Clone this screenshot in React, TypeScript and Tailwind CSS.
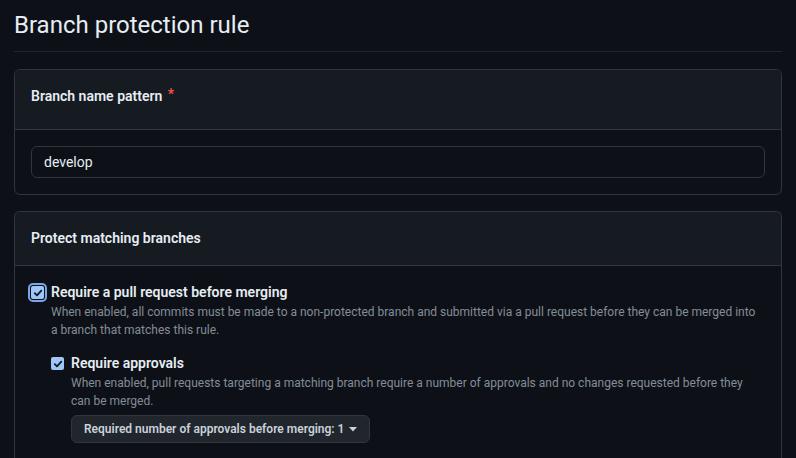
function Check({ focused }: { focused?: boolean }) {
  return (
    <span
      className={`flex h-[13px] w-[13px] shrink-0 items-center justify-center rounded-[2px] bg-[#9fc6f7] ${
        focused ? "outline outline-2 outline-offset-1 outline-[#78a6ea]" : ""
      }`}
    >
      <svg width="10" height="10" viewBox="0 0 10 10" fill="none">
        <path d="M1.8 5.2 4 7.3 8.3 2.6" stroke="#111827" strokeWidth="1.8" strokeLinecap="round" strokeLinejoin="round" />
      </svg>
    </span>
  );
}

export default function App() {
  return (
    <div className="min-h-[458px] bg-[#0d1117] px-[14px] font-['Roboto',sans-serif] text-[#e6edf3]">
      <div className="border-b border-[#21262d] pb-[11px] pt-[10px]">
        <h1 className="text-[24px] leading-[30px] font-normal text-[#e6edf3]">Branch protection rule</h1>
      </div>

      <div className="mt-[17px] rounded-md border border-[#30363d]">
        <div className="rounded-t-md border-b border-[#30363d] bg-[#161b22] px-4 pb-[22px] pt-4">
          <p className="text-[14px] leading-[21px] font-semibold">
            Branch name pattern <span className="relative -top-[2px] ml-[2px] text-[#f85149]">*</span>
          </p>
        </div>
        <div className="p-4">
          <div className="flex h-[32px] items-center rounded-md border border-[#30363d] bg-[#0d1117] px-3 text-[14px] text-[#e6edf3]">
            develop
          </div>
        </div>
      </div>

      <div className="mt-4 rounded-t-md border-x border-t border-[#30363d]">
        <div className="rounded-t-md border-b border-[#30363d] bg-[#161b22] p-4">
          <p className="text-[14px] leading-[21px] font-semibold">Protect matching branches</p>
        </div>
        <div className="p-4">
          <div className="flex items-start gap-[7px]">
            <div className="pt-[4px]">
              <Check focused />
            </div>
            <div>
              <p className="text-[14px] leading-[21px] font-semibold">Require a pull request before merging</p>
              <p className="text-[12px] leading-[18px] text-[#848d97]">
                When enabled, all commits must be made to a non-protected branch and submitted via a pull request before they can be merged into
                <br />
                a branch that matches this rule.
              </p>

              <div className="mt-[14px] flex items-start gap-[7px]">
                <div className="pt-[4px]">
                  <Check />
                </div>
                <div>
                  <p className="text-[14px] leading-[21px] font-semibold">Require approvals</p>
                  <p className="text-[12px] leading-[18px] text-[#848d97]">
                    When enabled, pull requests targeting a matching branch require a number of approvals and no changes requested before they can be merged.
                  </p>
                  <button className="mt-[5px] flex h-[28px] items-center gap-[5px] rounded-md border border-[#30363d] bg-[#21262d] px-3 text-[12px] font-semibold text-[#c9d1d9]">
                    Required number of approvals before merging: 1
                    <svg width="8" height="5" viewBox="0 0 8 5">
                      <path d="M0 0h8L4 4.5z" fill="#c9d1d9" />
                    </svg>
                  </button>
                </div>
              </div>
            </div>
          </div>
        </div>
      </div>
    </div>
  );
}
